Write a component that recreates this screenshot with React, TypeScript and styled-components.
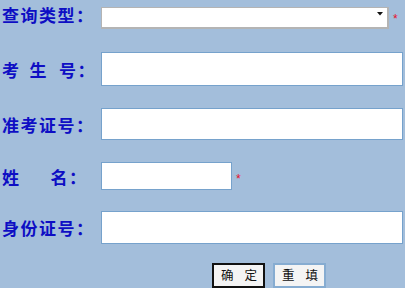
import React from "react";
import styled, { createGlobalStyle } from "styled-components";

const GlobalStyle = createGlobalStyle`
  html, body {
    margin: 0;
    padding: 0;
    background: #a3bedb;
  }
  body {
    width: 405px;
    height: 288px;
    overflow: hidden;
    font-family: "Noto Sans CJK SC", "Liberation Sans", sans-serif;
  }
`;

const Form = styled.form`
  display: flex;
  flex-direction: column;
  padding: 3px 0 0 2px;
`;

const Row = styled.div<{ $gap: number; $h: number }>`
  display: flex;
  align-items: center;
  margin-top: ${(p) => p.$gap}px;
  height: ${(p) => p.$h}px;
`;

const Label = styled.label`
  flex: none;
  width: 99px;
  display: flex;
  align-items: center;
  font-size: 17px;
  font-weight: bold;
  letter-spacing: 1.5px;
  line-height: 1;
  color: #0e0ec4;
  white-space: nowrap;
`;

const Spacer = styled.span<{ $w: number }>`
  display: inline-block;
  width: ${(p) => p.$w}px;
`;

const Input = styled.input<{ $w: number; $h: number }>`
  box-sizing: border-box;
  width: ${(p) => p.$w}px;
  height: ${(p) => p.$h}px;
  margin: 0;
  padding: 0 3px;
  border: 1px solid #76a2cc;
  background: #fff;
  outline: none;
`;

const SelectWrap = styled.div`
  position: relative;
  width: 288px;
  height: 22px;
`;

const Select = styled.select`
  box-sizing: border-box;
  width: 100%;
  height: 100%;
  margin: 0;
  border: 1px solid #b4b4b4;
  border-right-width: 2px;
  border-bottom-width: 2px;
  border-radius: 0;
  background: #fff;
  appearance: none;
  outline: none;
`;

const Arrow = styled.svg`
  position: absolute;
  right: 6px;
  top: 9px;
  pointer-events: none;
`;

const Star = styled.span<{ $dy: number }>`
  margin: ${(p) => p.$dy}px 0 0 4px;
  font-family: "Liberation Sans", sans-serif;
  font-size: 12px;
  line-height: 1;
  color: #e8102a;
`;

const ButtonRow = styled.div`
  display: flex;
  gap: 8px;
  margin-top: 19px;
  padding-left: 210px;
`;

const Button = styled.button<{ $primary?: boolean }>`
  box-sizing: border-box;
  width: 53px;
  height: 25px;
  margin: 0;
  padding: 0 0 0 7px;
  display: flex;
  align-items: center;
  border: 2px solid ${(p) => (p.$primary ? "#111" : "#86acd1")};
  background: #f4f4f4;
  font-family: "Noto Sans CJK SC", sans-serif;
  font-size: 12.5px;
  line-height: 1;
  color: #111;
`;

export default function App() {
  return (
    <>
      <GlobalStyle />
      <Form onSubmit={(e) => e.preventDefault()}>
        <Row $gap={0} $h={22}>
          <Label>查询类型：</Label>
          <SelectWrap>
            <Select defaultValue="">
              <option value=""></option>
            </Select>
            <Arrow width="6" height="4" viewBox="0 0 6 4">
              <path d="M0 0h6L3 3.5z" fill="#111" />
            </Arrow>
          </SelectWrap>
          <Star $dy={9}>*</Star>
        </Row>
        <Row $gap={27} $h={34}>
          <Label>
            考<Spacer $w={9} />生<Spacer $w={11} />号：
          </Label>
          <Input $w={302} $h={34} />
        </Row>
        <Row $gap={22} $h={32}>
          <Label>准考证号：</Label>
          <Input $w={302} $h={32} />
        </Row>
        <Row $gap={22} $h={28}>
          <Label>
            姓<Spacer $w={30} />名：
          </Label>
          <Input $w={131} $h={28} />
          <Star $dy={5}>*</Star>
        </Row>
        <Row $gap={21} $h={33}>
          <Label>身份证号：</Label>
          <Input $w={302} $h={33} />
        </Row>
        <ButtonRow>
          <Button type="submit" $primary>
            确<Spacer $w={11} />定
          </Button>
          <Button type="reset">
            重<Spacer $w={11} />填
          </Button>
        </ButtonRow>
      </Form>
    </>
  );
}
